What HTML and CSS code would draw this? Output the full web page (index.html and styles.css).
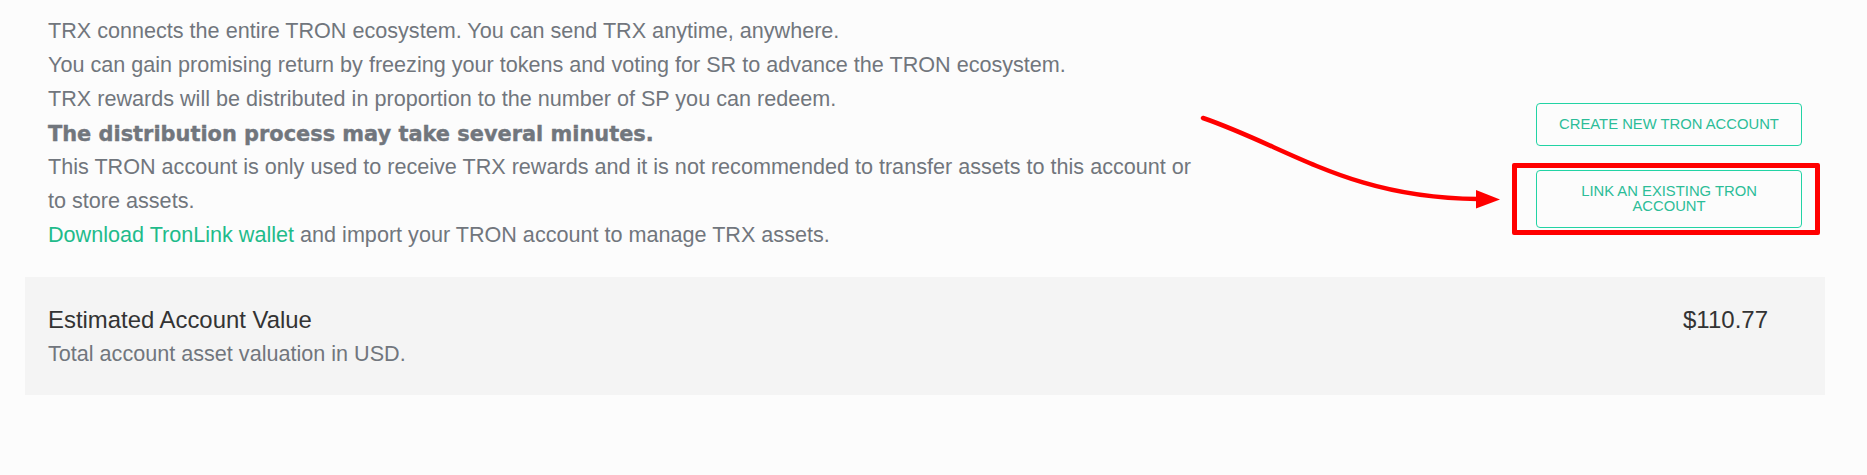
FILE: index.html
```html
<!DOCTYPE html>
<html lang="en">
<head>
<meta charset="utf-8">
<title>TRON account</title>
<link rel="stylesheet" href="styles.css">
</head>
<body>
<div class="page">
  <section class="intro">
    <div class="intro-text">
      <p>TRX connects the entire TRON ecosystem. You can send TRX anytime, anywhere.</p>
      <p>You can gain promising return by freezing your tokens and voting for SR to advance the TRON ecosystem.</p>
      <p>TRX rewards will be distributed in proportion to the number of SP you can redeem.</p>
      <p class="strong">The distribution process may take several minutes.</p>
      <p>This TRON account is only used to receive TRX rewards and it is not recommended to transfer assets to this account or to store assets.</p>
      <p><a class="link" href="#">Download TronLink wallet</a> and import your TRON account to manage TRX assets.</p>
    </div>
    <div class="actions">
      <button class="btn">CREATE NEW TRON ACCOUNT</button>
      <button class="btn">LINK AN EXISTING TRON ACCOUNT</button>
    </div>
  </section>
  <section class="card">
    <div class="card-info">
      <div class="card-title">Estimated Account Value</div>
      <div class="card-sub">Total account asset valuation in USD.</div>
    </div>
    <div class="card-value">$110.77</div>
  </section>
</div>
<div class="highlight"></div>
<svg class="arrow" width="1867" height="475" viewBox="0 0 1867 475" xmlns="http://www.w3.org/2000/svg">
  <path d="M1203 118 C1290 148 1350 198 1478 199" fill="none" stroke="#ff0000" stroke-width="4.5" stroke-linecap="round"/>
  <polygon points="1476,190 1500,199.5 1476,208.5" fill="#ff0000"/>
</svg>
</body>
</html>
```

FILE: styles.css
```css
html, body {
  margin: 0;
  padding: 0;
}

body {
  background: #fcfcfc;
  font-family: "Liberation Sans", Arial, sans-serif;
  color: #71767d;
  position: relative;
  width: 1867px;
  height: 475px;
  overflow: hidden;
}

.page {
  margin-left: 25px;
  width: 1800px;
}

.intro {
  display: flex;
  justify-content: space-between;
  align-items: flex-start;
  padding: 13.5px 23px 0 23px;
}

.intro-text {
  width: 1158px;
  font-size: 21.6px;
  line-height: 34.13px;
}

.intro-text p {
  margin: 0;
}

.intro-text .strong {
  font-family: "DejaVu Sans", "Liberation Sans", sans-serif;
  font-weight: bold;
  font-size: 20.9px;
  color: #71767d;
  -webkit-text-stroke: 0.4px #71767d;
  position: relative;
  top: 1.5px;
}

.link {
  color: #1fbb8b;
  text-decoration: none;
}

.actions {
  width: 266px;
  margin-top: 89px;
  display: flex;
  flex-direction: column;
  gap: 24px;
}

.btn {
  display: block;
  width: 266px;
  box-sizing: border-box;
  padding: 13px 12px;
  border: 1px solid #22d3a4;
  border-radius: 4px;
  background: #fcfcfc;
  color: #2cbd98;
  font-family: "Liberation Sans", Arial, sans-serif;
  font-size: 14.8px;
  line-height: 15px;
  text-align: center;
}

.card {
  margin-top: 24.5px;
  background: #f4f4f4;
  display: flex;
  justify-content: space-between;
  align-items: flex-start;
  padding: 25.8px 57px 24px 23px;
}

.card-title {
  font-size: 23.9px;
  line-height: 34.13px;
  color: #333333;
}

.card-sub {
  font-size: 21.6px;
  line-height: 34.13px;
  color: #71767d;
}

.card-value {
  font-size: 24px;
  line-height: 34.13px;
  color: #333333;
}

.highlight {
  position: absolute;
  left: 1512px;
  top: 163px;
  width: 308px;
  height: 72px;
  box-sizing: border-box;
  border: 5px solid #ff0000;
  border-radius: 2px;
}

.arrow {
  position: absolute;
  left: 0;
  top: 0;
  pointer-events: none;
}
```
